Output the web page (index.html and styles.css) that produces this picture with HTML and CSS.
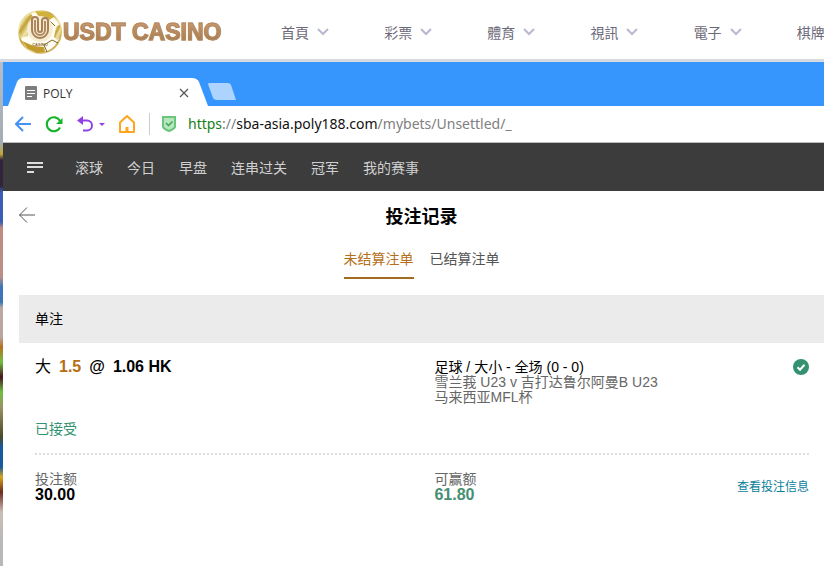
FILE: index.html
```html
<!DOCTYPE html>
<html lang="zh-CN">
<head>
    <meta charset="UTF-8">
    <meta name="viewport" content="width=device-width, initial-scale=1.0">
    <title>投注记录</title>
    <link rel="stylesheet" href="styles.css">
</head>
<body>
    <header class="site-header" lang="zh-TW">
      <a class="logo" href="#">
        <svg class="logo-ball" viewBox="0 0 46 46" aria-hidden="true">
          <defs>
            <linearGradient id="gold" x1="0" y1="0" x2="1" y2="1">
              <stop offset="0" stop-color="#c9a72c"/>
              <stop offset="0.2" stop-color="#f6eebc"/>
              <stop offset="0.4" stop-color="#c2a136"/>
              <stop offset="0.6" stop-color="#efe4ac"/>
              <stop offset="1" stop-color="#b98d22"/>
            </linearGradient>
          </defs>
          <circle cx="23" cy="23" r="21" fill="#fffdf4" stroke="url(#gold)" stroke-width="2"/>
          <path d="M3 17 8 9 14 5 18 10 11 17 11 27 4 29 2 23Z" fill="url(#gold)"/>
          <path d="M18 2 31 3 37 8 32 11 22 8Z" fill="#cfb13c"/>
          <path d="M39 17 43 16 44 27 40 31 37 28Z" fill="url(#gold)"/>
          <path d="M5 32 12 35 17 37 27 38 28 43 20 44 11 40Z" fill="#c29b2c"/>
          <path d="M27 36 35 31M35 31 41 34M27 36 30 43M32 11 38 17" fill="none" stroke="#7d6420"/>
          <circle cx="23" cy="20" r="13" fill="#f6edd2"/>
          <path d="M15 9v12a8 8 0 0 0 16 0V12a3 3 0 0 0-6 0v9a2 2 0 0 1-4 0V11a3 3 0 0 0-6 0" fill="none" stroke="#a98058" stroke-width="2"/>
          <path d="M18 11v10a5 5 0 0 0 10 0V12" fill="none" stroke="#b08a60" stroke-width="2"/>
          <text class="logo-small" x="23" y="37" text-anchor="middle">CASINO</text>
        </svg>
        <span class="logo-text">USDT CASINO</span>
      </a>
      <nav class="site-nav">
        <button class="site-item">首頁<svg class="chevron" viewBox="0 0 12 8"><path d="M1 1l5 5 5-5"/></svg></button>
        <button class="site-item">彩票<svg class="chevron" viewBox="0 0 12 8"><path d="M1 1l5 5 5-5"/></svg></button>
        <button class="site-item">體育<svg class="chevron" viewBox="0 0 12 8"><path d="M1 1l5 5 5-5"/></svg></button>
        <button class="site-item">視訊<svg class="chevron" viewBox="0 0 12 8"><path d="M1 1l5 5 5-5"/></svg></button>
        <button class="site-item">電子<svg class="chevron" viewBox="0 0 12 8"><path d="M1 1l5 5 5-5"/></svg></button>
        <button class="site-item">棋牌</button>
      </nav>
    </header>

    <div class="backdrop">
      <div class="browser">
        <div class="tab-bar">
          <div class="tab">
            <svg class="tab-shape" viewBox="0 0 200 28" preserveAspectRatio="none" aria-hidden="true">
              <path d="M0 28 9 4Q11 0 15 0H184Q189 0 191 4L200 28Z" fill="#fff"/>
            </svg>
            <svg class="tab-icon" viewBox="0 0 12 14" aria-hidden="true">
              <rect width="12" height="14" rx="1" fill="#7d7d7d"/>
              <path d="M2 4.500h8M2 7.500h8M2 10.500h5" stroke="#fff"/>
            </svg>
            <span class="tab-title">POLY</span>
            <button class="tab-close" aria-label="Close tab">
              <svg viewBox="0 0 10 10"><path d="M1 1l8 8M9 1l-8 8" stroke="#555" stroke-width="1.200"/></svg>
            </button>
          </div>
          <button class="new-tab" aria-label="New tab">
            <svg viewBox="0 0 28 17"><path d="M2 0H20Q22 0 23 2L28 17H9Q6 17 5 15L0 1Q0 0 2 0Z" fill="#add3ff"/></svg>
          </button>
        </div>

        <div class="toolbar">
          <button class="tool" aria-label="Back">
            <svg width="16" height="16" viewBox="0 0 16 16"><path d="M8 1 1 8l7 7M1 8h15" stroke="#4592f5" stroke-width="2"/></svg>
          </button>
          <button class="tool" aria-label="Reload">
            <svg width="18" height="18" viewBox="0 0 18 18"><path d="M15 12.500A7 7 0 1 1 15 6" stroke="#17b52b" stroke-width="2.200"/><path d="M17.500 3v6h-6.500Z" fill="#17b52b"/></svg>
          </button>
          <button class="tool" aria-label="Undo">
            <svg width="28" height="16" viewBox="0 0 28 16"><path d="M4 4.500h6a5 5 0 0 1 0 10H6" stroke="#9141e3" stroke-width="2"/><path d="M0 4.500 6 0v9Z" fill="#9141e3"/><path d="M22 7h6l-3 3Z" fill="#9141e3"/></svg>
          </button>
          <button class="tool" aria-label="Home">
            <svg width="16" height="18" viewBox="0 0 16 18"><path d="M1 7.500 8 1l7 6.500V17H1Z" stroke="#ffa51f" stroke-width="2" stroke-linejoin="round"/><path d="M6.500 17v-5h3v5Z" fill="#ffa51f"/></svg>
          </button>
          <span class="divider"></span>
          <svg class="shield" width="14" height="16" viewBox="0 0 14 16" aria-hidden="true"><path d="M1 1h12v10Q12 13 7 15 2 13 1 11Z" fill="#b5e6bd" stroke="#6bc67c" stroke-width="2"/><path d="M4 7l2.500 2.500L10.500 5.500" fill="none" stroke="#40a455" stroke-width="1.500"/></svg>
          <a class="url" href="#"><span class="secure">https</span>://<span class="host">sba-asia.poly188.com</span>/mybets/Unsettled/_</a>
        </div>

        <nav class="menu">
          <button class="menu-toggle" aria-label="Menu">
            <svg width="16" height="11" viewBox="0 0 16 11"><path d="M0 1h16M0 5h16M0 10h7" stroke="#ddd" stroke-width="2"/></svg>
          </button>
          <a href="#">滚球</a>
          <a href="#">今日</a>
          <a href="#">早盘</a>
          <a href="#">连串过关</a>
          <a href="#">冠军</a>
          <a href="#">我的赛事</a>
        </nav>

        <main class="page">
          <div class="page-head">
            <button class="page-back" aria-label="返回">
              <svg width="16" height="16" viewBox="0 0 16 16"><path d="M8 0.500 0.500 8 8 15.500M0.500 8H16" stroke="#555"/></svg>
            </button>
            <h1>投注记录</h1>
          </div>

          <div class="bet-tabs">
            <button class="bet-tab active">未结算注单</button>
            <button class="bet-tab">已结算注单</button>
          </div>

          <h2 class="group">单注</h2>

          <section class="bet">
            <div class="bet-row bet-info">
              <div>
                <div class="pick"><span class="choice">大</span><span class="line">1.5</span><span>@</span><span>1.06 HK</span></div>
                <div class="status">已接受</div>
              </div>
              <div class="match">
                <div>
                  <div class="market">足球 / 大小 - 全场 (0 - 0)</div>
                  <div>雪兰莪 U23 v 吉打达鲁尔阿曼B U23</div>
                  <div>马来西亚MFL杯</div>
                </div>
                <svg width="16" height="16" viewBox="0 0 16 16" role="img" aria-label="已接受"><circle cx="8" cy="8" r="8" fill="#349270"/><path d="M4.500 8.200 7 10.700 11.500 5.800" fill="none" stroke="#fff" stroke-width="2"/></svg>
              </div>
            </div>
            <div class="bet-row bet-money">
              <div>
                <div>投注额</div>
                <div class="amount">30.00</div>
              </div>
              <div class="win">
                <div>
                  <div>可赢额</div>
                  <div class="amount green">61.80</div>
                </div>
                <a class="details" href="#">查看投注信息</a>
              </div>
            </div>
          </section>
        </main>
      </div>
    </div>
</body>
</html>
```
FILE: styles.css
```css
* {
  box-sizing: border-box;
}

body {
  margin: 0;
  min-height: 100vh;
  display: flex;
  flex-direction: column;
  overflow-x: hidden;
  font-family: "Liberation Sans", "Noto Sans CJK SC", sans-serif;
  font-size: 14px;
  background-color: white;
}

button {
  padding: 0;
  border: none;
  background: none;
  font: inherit;
  color: inherit;
  cursor: pointer;
}

a {
  color: inherit;
  text-decoration: none;
}

svg {
  display: block;
  flex-shrink: 0;
  fill: none;
}

/* casino site */
.site-header {
  display: flex;
  align-items: center;
  height: 62px;
  padding-left: 17px;
  border-bottom: 3px solid #d8dae2;
  overflow: hidden;
}

.logo {
  display: flex;
  align-items: center;
  width: 264px;
  flex-shrink: 0;
  padding-top: 5px;
}

.logo-ball {
  width: 46px;
  height: 46px;
}

.logo-small {
  font-size: 4px;
  font-weight: bold;
  fill: #8a6a30;
}

.logo-text {
  font-size: 23px;
  font-weight: bold;
  line-height: 28px;
  white-space: nowrap;
  color: transparent;
  background: linear-gradient(#d2a07a, #9c7444);
  background-clip: text;
  -webkit-text-stroke: 1px #b58a60;
}

.site-nav {
  display: flex;
  flex: 1;
  min-width: 0;
  padding-top: 4px;
}

.site-item {
  display: flex;
  align-items: center;
  gap: 8px;
  flex: 0 0 19%;
  font-family: "Noto Sans CJK TC", sans-serif;
  line-height: 20px;
  white-space: nowrap;
  color: #6c6a78;
}

.chevron {
  width: 12px;
  height: 8px;
  stroke: #b9b8d3;
  stroke-width: 2;
}

/* strip of the site that shows beside the browser window */
.backdrop {
  display: flex;
  flex: 1;
  padding-left: 3px;
  background: linear-gradient(#b5bdc6 0, #a4adb5 80px, #c3a53a 92px, #33243d 98px, #30233a 124px, #3a5db5 130px, #3a5db5 160px, #c08a80 166px, #b99088 215px, #3d75b8 225px, #3d75b8 240px, #bcaaa2 246px, #b8a69e 275px, #b86f20 285px, #6cc040 300px, #4a1420 315px, #6cc040 330px, #9c9162 345px, #4a4a28 375px, #16599e 385px, #16599e 405px, #d9a420 415px, #6d2c1c 430px, #c9bdb6 450px, #b8b8b8 480px);
}

.browser {
  flex: 1;
  min-width: 0;
  background-color: white;
}

.tab-bar {
  display: flex;
  align-items: flex-end;
  height: 44px;
  padding-left: 5px;
  background-color: #3796fe;
}

.tab {
  position: relative;
  display: flex;
  align-items: center;
  width: 200px;
  height: 28px;
  padding: 2px 19px 0 17px;
}

.tab-shape {
  position: absolute;
  inset: 0;
  width: 100%;
  height: 100%;
}

.tab-icon {
  position: relative;
  width: 12px;
  height: 14px;
}

.tab-title {
  position: relative;
  flex: 1;
  margin-left: 6px;
  font-family: "Open Sans", sans-serif;
  font-size: 12px;
  color: #333;
}

.tab-close {
  position: relative;
  width: 10px;
}

.new-tab {
  width: 28px;
  margin-bottom: 6px;
}

.toolbar {
  display: flex;
  align-items: center;
  height: 37px;
  padding-left: 12px;
  border-bottom: 1px solid #bbb;
}

.tool {
  margin-right: 14px;
}

.divider {
  width: 1px;
  height: 22px;
  margin-right: 12px;
  background-color: #ccc;
}

.url {
  margin-left: 12px;
  font-family: "Noto Sans", sans-serif;
  font-size: 14px;
  line-height: 20px;
  white-space: nowrap;
  color: #808080;
}

.secure {
  color: #168016;
}

.host {
  color: #111;
}

/* sportsbook */
.menu {
  display: flex;
  align-items: center;
  gap: 24px;
  height: 48px;
  padding-left: 24px;
  background-color: #3c3c3c;
  color: #d0d0d0;
  white-space: nowrap;
}

.menu-toggle {
  margin-right: 8px;
}

.page {
  padding-left: 16px;
}

.page-head {
  display: grid;
  grid-template-columns: 16px 1fr 16px;
  align-items: center;
  height: 48px;
}

h1 {
  margin: 0;
  font-size: 18px;
  text-align: center;
}

.bet-tabs {
  display: flex;
  justify-content: center;
  gap: 16px;
  margin-bottom: 16px;
}

.bet-tab {
  height: 40px;
  border-bottom: 2px solid transparent;
  color: #555;
}

.bet-tab.active {
  color: #b56f1a;
  border-color: #a46c22;
}

.group {
  margin: 0;
  padding: 0 16px;
  font-size: 14px;
  font-weight: normal;
  line-height: 48px;
  background-color: #ebebeb;
}

.bet {
  padding: 0 15px 0 16px;
  line-height: 15px;
  color: #666;
}

.bet-row {
  display: grid;
  grid-template-columns: 16fr 15fr;
}

.bet-info {
  padding: 16px 0;
  border-bottom: 2px dotted #ddd;
}

.pick {
  display: flex;
  gap: 8px;
  height: 62px;
  font-size: 16px;
  font-weight: bold;
  color: black;
}

.choice {
  font-weight: normal;
}

.line {
  color: #b86c14;
}

.status {
  line-height: 16px;
  color: #349270;
}

.match,
.win {
  display: flex;
  justify-content: space-between;
}

.market {
  line-height: 16px;
  color: black;
}

.bet-money {
  padding: 17px 0;
}

.amount {
  font-size: 16px;
  font-weight: bold;
  line-height: 16px;
  color: black;
}

.green {
  color: #468f72;
}

.details {
  align-self: center;
  font-size: 12px;
  color: #0b7f9c;
}
```
